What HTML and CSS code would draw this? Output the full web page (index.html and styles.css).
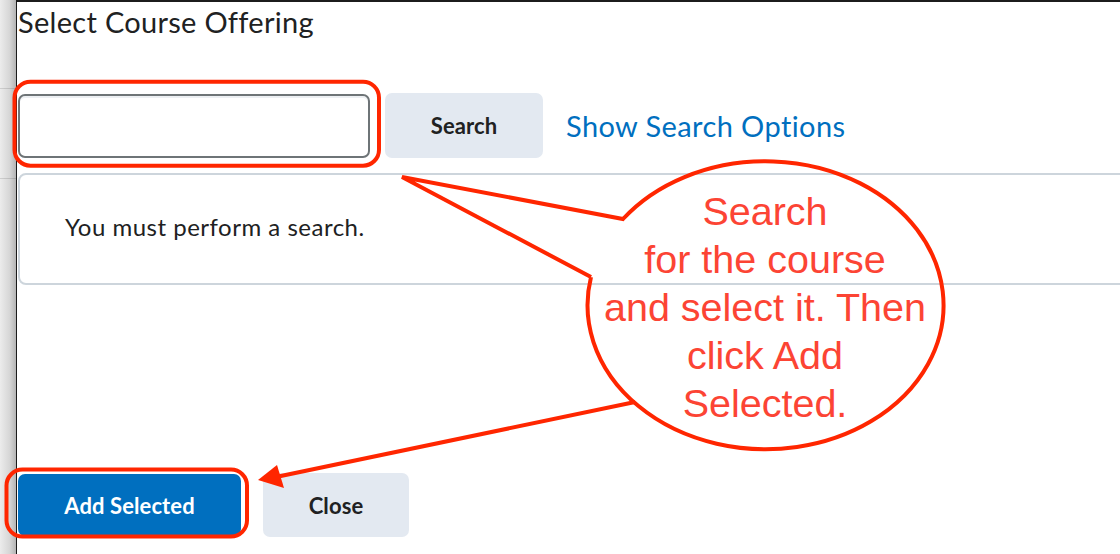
FILE: index.html
```html
<!DOCTYPE html>
<html lang="en">
<head>
<meta charset="utf-8">
<title>Select Course Offering</title>
<link rel="stylesheet" href="styles.css">
</head>
<body>
<div class="page">
  <div class="backdrop-strip">
    <span class="strip-line strip-line-1"></span>
    <span class="strip-line strip-line-2"></span>
  </div>
  <div class="dialog">
    <h1 class="dialog-title">Select Course Offering</h1>
    <div class="search-row">
      <input class="search-input" type="text" aria-label="Search">
      <button class="btn btn-secondary">Search</button>
      <a class="search-options" href="#">Show Search Options</a>
    </div>
    <div class="results">
      <p class="results-empty">You must perform a search.</p>
    </div>
    <div class="dialog-footer">
      <button class="btn btn-primary">Add Selected</button>
      <button class="btn btn-secondary">Close</button>
    </div>
  </div>
</div>
<svg class="annotations" width="1120" height="554" viewBox="0 0 1120 554">
  <rect x="14.5" y="81.7" width="364.5" height="84" rx="16" ry="16" class="ann-stroke"/>
  <rect x="6.5" y="469.6" width="240.5" height="67" rx="16" ry="16" class="ann-stroke"/>
  <path class="ann-stroke" d="M591 277 L402 177 L623 219 A178 144 0 1 1 591 277"/>
  <line class="ann-stroke" x1="635" y1="402" x2="276" y2="477"/>
  <polygon class="ann-fill" points="258,480 277,465 284,488"/>
  <text class="ann-text" x="765" y="225">Search</text>
  <text class="ann-text" x="765" y="273">for the course</text>
  <text class="ann-text" x="765" y="321">and select it. Then</text>
  <text class="ann-text" x="765" y="369">click Add</text>
  <text class="ann-text" x="765" y="417">Selected.</text>
</svg>
</body>
</html>
```
FILE: styles.css
```css
html, body {
  margin: 0;
  padding: 0;
  width: 1120px;
  height: 554px;
  overflow: hidden;
  background: #ffffff;
}

body {
  position: relative;
  font-family: Lato, "Noto Sans", sans-serif;
  color: #202122;
}

.page {
  display: flex;
  height: 554px;
}

.backdrop-strip {
  position: relative;
  flex: 0 0 16px;
  background: linear-gradient(to right, #ececec 0%, #d6d6d6 60%, #b4b4b4 100%);
  border-right: 1px solid #1a1a1a;
}

.strip-line {
  position: absolute;
  left: 0;
  right: 0;
  height: 1px;
  background: rgba(0, 0, 0, 0.12);
}

.strip-line-1 { top: 88px; }
.strip-line-2 { top: 178px; }

.dialog {
  flex: 1;
  min-width: 0;
  border-top: 2px solid #1c1c1c;
  padding-left: 1px;
  overflow: hidden;
}

.dialog-title {
  margin: 4px 0 0 0;
  font-size: 29px;
  font-weight: 400;
  line-height: 32px;
  letter-spacing: 0.3px;
  color: #202122;
}

.search-row {
  display: flex;
  align-items: center;
  margin-top: 55px;
  height: 65px;
}

.search-input {
  box-sizing: border-box;
  width: 352px;
  height: 64px;
  margin: 1px 0 0 0;
  border: 2px solid #6e7477;
  border-radius: 7px;
  background: #ffffff;
  box-shadow: inset 0 2px 0 rgba(185, 194, 208, 0.25);
}

.btn {
  box-sizing: border-box;
  height: 64px;
  padding: 0 46px;
  border: none;
  border-radius: 7px;
  font-family: Lato, "Noto Sans", sans-serif;
  font-size: 22px;
  font-weight: 700;
  letter-spacing: 0.1px;
  cursor: pointer;
}

.btn-secondary {
  background: #e3e9f1;
  color: #202122;
}

.btn-primary {
  background: #006fbf;
  color: #ffffff;
}

.search-row .btn {
  margin-left: 15px;
  height: 65px;
  width: 158px;
  padding: 0;
}

.search-options {
  margin-left: 23px;
  font-size: 29px;
  letter-spacing: 0.4px;
  color: #006fbf;
  text-decoration: none;
}

.results {
  box-sizing: border-box;
  display: flex;
  align-items: center;
  margin-top: 15px;
  width: calc(100% + 20px);
  height: 112px;
  border: 2px solid #cdd5dc;
  border-radius: 8px;
  padding-left: 45px;
}

.results-empty {
  margin: -5px 0 0 0;
  font-size: 24px;
  letter-spacing: 0.5px;
  color: #202122;
}

.dialog-footer {
  display: flex;
  align-items: center;
  gap: 22px;
  margin-top: 188px;
  margin-left: 0;
}

.dialog-footer .btn-primary {
  width: 223px;
  height: 62px;
  padding: 0;
}

.dialog-footer .btn-secondary {
  width: 146px;
  padding: 0;
}

.annotations {
  position: absolute;
  left: 0;
  top: 0;
  pointer-events: none;
}

.ann-stroke {
  fill: none;
  stroke: #ff2600;
  stroke-width: 4;
  stroke-linejoin: miter;
}

.ann-fill {
  fill: #ff2600;
}

.ann-text {
  font-family: "Liberation Sans", Arial, sans-serif;
  font-size: 39.5px;
  fill: #fc4434;
  text-anchor: middle;
}
```
